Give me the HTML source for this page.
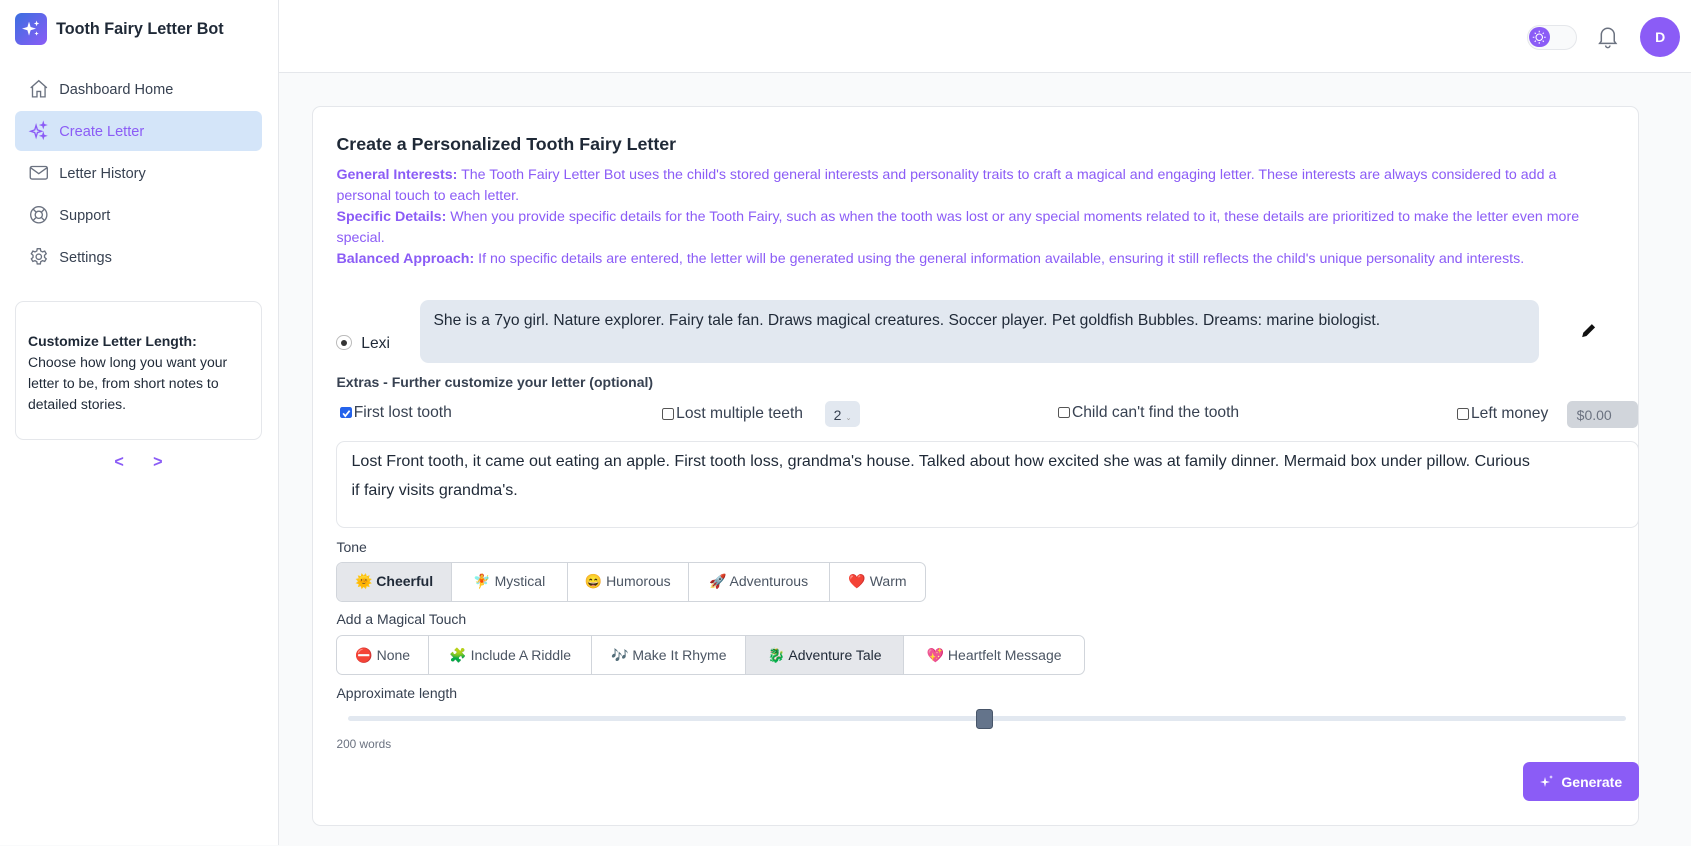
<!DOCTYPE html>
<html><head><meta charset="utf-8"><style>
html{zoom:1.07844}
*{box-sizing:border-box;margin:0;padding:0}
body{width:1568px;height:784px;overflow:hidden;background:#f9fafb;font-family:"Liberation Sans","Noto Sans CJK SC",sans-serif;color:#1f2937;position:relative}
.a{position:absolute}
.side{left:0;top:0;width:259px;height:784px;background:#fff;border-right:1px solid #e5e7eb}
.hdr{left:259px;top:0;width:1309px;height:68px;background:#fff;border-bottom:1px solid #e5e7eb}
.nav{left:14px;width:229px;height:37px;border-radius:6px;font-size:13.5px;color:#374151;display:flex;align-items:center;padding-left:41px;padding-top:2px}
.nav svg{position:absolute;left:12px;top:8px}
.p{font-size:13.2px;color:#8b5cf6;line-height:19.5px}
.p b{font-weight:700}
.cb{display:inline-block;width:11px;height:11px;border:1px solid #555;border-radius:2px;vertical-align:-1px;margin-right:2px;background:#fff}
.lbl{font-size:14.5px;color:#374151}
.grp{display:flex;border:1px solid #d1d5db;border-radius:6px;overflow:hidden;height:37px;background:#fff}
.grp div{display:flex;align-items:center;justify-content:center;font-size:13px;color:#4b5563;border-right:1px solid #d1d5db;gap:6px}
.grp div:last-child{border-right:none}
.grp .on{background:#e5e7eb;color:#1f2937;font-weight:600}
.sm{font-size:13px;color:#374151;font-weight:600}
</style></head><body>
<div class="a side"></div>
<div class="a hdr"></div>
<div class="a" style="left:14px;top:12px;width:30px;height:30px;border-radius:6px;background:linear-gradient(135deg,#3b6fe0,#8b5cf6)">
<svg width="30" height="30" viewBox="0 0 30 30"><path d="M13 8 L14.5 13 L19.5 14.5 L14.5 16 L13 21 L11.5 16 L6.5 14.5 L11.5 13Z M20 7 L20.7 9 L22.5 9.7 L20.7 10.4 L20 12.3 L19.3 10.4 L17.5 9.7 L19.3 9Z M20 17 L20.6 18.5 L22 19 L20.6 19.6 L20 21 L19.4 19.6 L18 19 L19.4 18.5Z" fill="#fff"/></svg></div>
<div class="a" style="left:52px;top:19px;font-size:15px;font-weight:700;color:#1f2937">Tooth Fairy Letter Bot</div>

<div class="a nav" style="top:64px"><svg width="20" height="20" viewBox="0 0 24 24" fill="none" stroke="#6b7280" stroke-width="1.5"><path d="M3 11 L12 3 L21 11 M5 9.5V21h5v-6h4v6h5V9.5"/></svg>Dashboard Home</div>
<div class="a nav" style="top:103px;background:#d4e5f9;color:#8b5cf6"><svg width="20" height="20" viewBox="0 0 24 24" fill="none" stroke="#8b5cf6" stroke-width="1.5"><path d="M9 6 L10.5 11 L15 12.5 L10.5 14 L9 19 L7.5 14 L3 12.5 L7.5 11Z M17 3 L17.6 5 L19.5 5.6 L17.6 6.2 L17 8 L16.4 6.2 L14.5 5.6 L16.4 5Z M17 15 L17.6 17 L19.5 17.6 L17.6 18.2 L17 20 L16.4 18.2 L14.5 17.6 L16.4 17Z"/></svg>Create Letter</div>
<div class="a nav" style="top:142px"><svg width="20" height="20" viewBox="0 0 24 24" fill="none" stroke="#6b7280" stroke-width="1.5"><rect x="2.5" y="5" width="19" height="14" rx="2"/><path d="M3 6.5 L12 13 L21 6.5"/></svg>Letter History</div>
<div class="a nav" style="top:181px"><svg width="20" height="20" viewBox="0 0 24 24" fill="none" stroke="#6b7280" stroke-width="1.5"><circle cx="12" cy="12" r="9"/><circle cx="12" cy="12" r="4"/><path d="M5.6 5.6 9.2 9.2M18.4 5.6 14.8 9.2M5.6 18.4 9.2 14.8M18.4 18.4 14.8 14.8"/></svg>Support</div>
<div class="a nav" style="top:220px"><svg width="20" height="20" viewBox="0 0 24 24" fill="none" stroke="#6b7280" stroke-width="1.5"><path d="M10.3 3h3.4l.5 2.5 2 1.1 2.4-.9 1.7 2.9-1.9 1.7v2.3l1.9 1.7-1.7 2.9-2.4-.9-2 1.1-.5 2.6h-3.4l-.5-2.6-2-1.1-2.4.9-1.7-2.9 1.9-1.7v-2.3L3.7 8.6l1.7-2.9 2.4.9 2-1.1z"/><circle cx="12" cy="12" r="3"/></svg>Settings</div>

<div class="a" style="left:14px;top:279px;width:229px;height:129px;border:1px solid #e5e7eb;border-radius:8px;padding:27px 11px 0 11px;font-size:13px;line-height:19.5px;color:#1f2937"><b>Customize Letter Length:</b><br>Choose how long you want your letter to be, from short notes to detailed stories.</div>
<div class="a" style="left:106px;top:420px;font-size:15px;font-weight:700;color:#8b5cf6">&lt;</div>
<div class="a" style="left:142px;top:420px;font-size:15px;font-weight:700;color:#8b5cf6">&gt;</div>

<div class="a" style="left:1416px;top:23px;width:46px;height:23px;border-radius:12px;border:1px solid #e5e7eb;background:#f9fafb"><div class="a" style="left:1px;top:1px;width:19px;height:19px;border-radius:50%;background:#8b5cf6"><svg width="19" height="19" viewBox="0 0 19 19" fill="none" stroke="#fff" stroke-width="1"><circle cx="9.5" cy="9.5" r="3"/><path d="M9.5 3.5v1.5M9.5 14v1.5M3.5 9.5H5M14 9.5h1.5M5.3 5.3l1 1M12.7 12.7l1 1M5.3 13.7l1-1M12.7 6.3l1-1"/></svg></div></div>
<svg class="a" style="left:1481px;top:23px" width="20" height="22" viewBox="0 0 20 22" fill="none" stroke="#6b7280" stroke-width="1.4"><path d="M4 15V9a6 6 0 0 1 12 0v6l1.5 2h-15z M8 19a2 2 0 0 0 4 0"/></svg>
<div class="a" style="left:1521px;top:16px;width:37px;height:37px;border-radius:50%;background:#8b5cf6;color:#fff;font-weight:700;font-size:13px;display:flex;align-items:center;justify-content:center">D</div>

<div class="a" style="left:289px;top:98px;width:1231px;height:668px;background:#fff;border:1px solid #e5e7eb;border-radius:8px"></div>
<div class="a" style="left:312px;top:124px;font-size:16.5px;font-weight:600;color:#1f2937">Create a Personalized Tooth Fairy Letter</div>
<div class="a p" style="left:312px;top:153px;width:1175px"><b>General Interests:</b> The Tooth Fairy Letter Bot uses the child's stored general interests and personality traits to craft a magical and engaging letter. These interests are always considered to add a personal touch to each letter.<br><b>Specific Details:</b> When you provide specific details for the Tooth Fairy, such as when the tooth was lost or any special moments related to it, these details are prioritized to make the letter even more special.<br><b>Balanced Approach:</b> If no specific details are entered, the letter will be generated using the general information available, ensuring it still reflects the child's unique personality and interests.</div>

<div class="a" style="left:312px;top:311px;width:14px;height:14px;border-radius:50%;border:1px solid #bbb;background:#fff"><div class="a" style="left:3px;top:3px;width:6px;height:6px;border-radius:50%;background:#333"></div></div>
<div class="a" style="left:335px;top:311px;font-size:14.5px;color:#1f2937">Lexi</div>
<div class="a" style="left:389px;top:278px;width:1038px;height:59px;background:#e2e8f0;border-radius:8px;padding:11px 13px;font-size:14.5px;color:#1f2937">She is a 7yo girl. Nature explorer. Fairy tale fan. Draws magical creatures. Soccer player. Pet goldfish Bubbles. Dreams: marine biologist.</div>
<svg class="a" style="left:1465px;top:299px" width="16" height="16" viewBox="0 0 16 16"><path d="M2 14 L3 10 L11 2 L14 5 L6 13Z" fill="#111"/></svg>

<div class="a sm" style="left:312px;top:347px">Extras - Further customize your letter (optional)</div>
<div class="a lbl" style="left:315px;top:375px"><span class="cb" style="background:#2563eb;border-color:#2563eb;position:relative"><svg class="a" style="left:0;top:0" width="10" height="10" viewBox="0 0 10 10"><path d="M2 5 L4 7.5 L8 2.5" stroke="#fff" stroke-width="1.6" fill="none"/></svg></span>First lost tooth</div>
<div class="a lbl" style="left:614px;top:376px"><span class="cb"></span>Lost multiple teeth</div>
<div class="a" style="left:765px;top:372px;width:32px;height:24px;background:#e2e8f0;border-radius:5px;font-size:13px;padding:5px 0 0 8px;color:#374151">2 <span style="font-size:7px;color:#999">⌄</span></div>
<div class="a lbl" style="left:981px;top:375px"><span class="cb"></span>Child can't find the tooth</div>
<div class="a lbl" style="left:1351px;top:376px"><span class="cb"></span>Left money</div>
<div class="a" style="left:1453px;top:372px;width:66px;height:25px;background:#d1d5db;border-radius:5px;font-size:13px;padding:5px 0 0 9px;color:#6b7280">$0.00</div>

<div class="a" style="left:312px;top:409px;width:1208px;height:81px;border:1px solid #e5e7eb;border-radius:8px;padding:5px 13px 5px 13px;font-size:14.9px;line-height:26px;color:#1f2937">Lost Front tooth, it came out eating an apple. First tooth loss, grandma's house. Talked about how excited she was at family dinner. Mermaid box under pillow. Curious<br>if fairy visits grandma's.</div>

<div class="a sm" style="left:312px;top:500px;font-weight:500">Tone</div>
<div class="a grp" style="left:312px;top:521px;width:547px">
<div class="on" style="width:106px">🌞 Cheerful</div><div style="width:108px">🧚 Mystical</div><div style="width:112px">😄 Humorous</div><div style="width:131px">🚀 Adventurous</div><div style="width:89px">❤️ Warm</div></div>
<div class="a sm" style="left:312px;top:567px;font-weight:500">Add a Magical Touch</div>
<div class="a grp" style="left:312px;top:589px;width:694px">
<div style="width:85px">⛔ None</div><div style="width:152px">🧩 Include A Riddle</div><div style="width:143px">🎶 Make It Rhyme</div><div class="on" style="width:147px;font-weight:500">🐉 Adventure Tale</div><div style="width:167px">💖 Heartfelt Message</div></div>

<div class="a sm" style="left:312px;top:635px;font-weight:500">Approximate length</div>
<div class="a" style="left:323px;top:664px;width:1185px;height:5px;border-radius:3px;background:#e2e8f0"></div>
<div class="a" style="left:905px;top:657px;width:16px;height:19px;border-radius:3px;background:#64748b;border:1px solid #475569"></div>
<div class="a" style="left:312px;top:683px;font-size:11px;color:#6b7280">200 words</div>

<div class="a" style="left:1412px;top:707px;width:108px;height:36px;border-radius:6px;background:#8b5cf6;color:#fff;font-size:13px;font-weight:600;display:flex;align-items:center;justify-content:center;gap:7px"><svg width="13" height="13" viewBox="0 0 14 14" fill="#fff"><path d="M5 2 L6 6 L10 7 L6 8 L5 12 L4 8 L0 7 L4 6Z M11 0 L11.5 1.5 L13 2 L11.5 2.5 L11 4 L10.5 2.5 L9 2 L10.5 1.5Z"/></svg>Generate</div>
</body></html>
